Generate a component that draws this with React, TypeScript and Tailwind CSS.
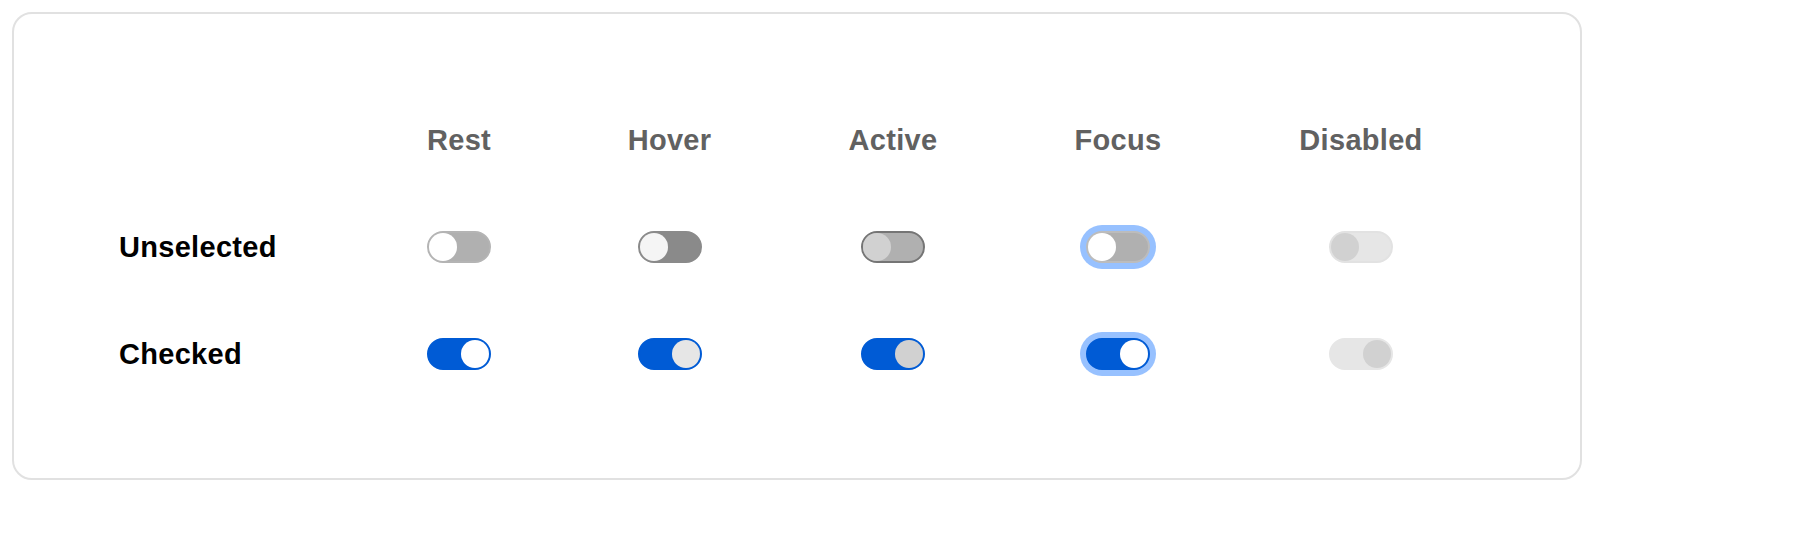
import React from 'react';

type ToggleStyle = {
  track: string;
  thumb: string;
  ring?: boolean;
};

const STATES = ['Rest', 'Hover', 'Active', 'Focus', 'Disabled'];

const UNSELECTED: ToggleStyle[] = [
  { track: 'bg-[#b0b0b0] border-[#b4b4b4]', thumb: 'bg-white' },
  { track: 'bg-[#8a8a8a] border-[#8a8a8a]', thumb: 'bg-[#f5f5f5]' },
  { track: 'bg-[#b0b0b0] border-[#757575]', thumb: 'bg-[#d1d1d1]' },
  { track: 'bg-[#b0b0b0] border-[#bcbcbc]', thumb: 'bg-white', ring: true },
  { track: 'bg-[#e6e6e6] border-[#e2e2e2]', thumb: 'bg-[#d1d1d1]' },
];

const CHECKED: ToggleStyle[] = [
  { track: 'bg-[#005bd5] border-[#005bd5]', thumb: 'bg-white' },
  { track: 'bg-[#005bd5] border-[#005bd5]', thumb: 'bg-[#e6e6e6]' },
  { track: 'bg-[#005bd5] border-[#005bd5]', thumb: 'bg-[#d1d1d1]' },
  { track: 'bg-[#005bd5] border-[#005bd5]', thumb: 'bg-white', ring: true },
  { track: 'bg-[#e6e6e6] border-[#e6e6e6]', thumb: 'bg-[#d1d1d1]' },
];

const Toggle: React.FC<{ on: boolean; look: ToggleStyle }> = ({ on, look }) => (
  <div
    className={`flex h-8 w-16 items-center rounded-full border-2 ${look.track} ${on ? 'justify-end' : 'justify-start'} ${
      look.ring ? 'ring-[6px] ring-[#97c1ff]' : ''
    }`}
  >
    <div className={`h-7 w-7 rounded-full ${look.thumb}`} />
  </div>
);

export default function App() {
  return (
    <div className="min-h-screen bg-white p-3 font-['Liberation_Sans',Arial,sans-serif]">
      <div className="h-[468px] w-[1570px] rounded-[20px] border-2 border-[#e1e1e1] pl-[105px] pt-[110px]">
        <div className="grid grid-cols-[240px_200px_221px_226px_224px_262px] grid-rows-[32px_32px_32px] items-center gap-y-[75px] text-[29px] font-bold leading-8 tracking-[0.3px]">
          <div />
          {STATES.map((s) => (
            <div key={s} className="text-center text-[#616161]">
              {s}
            </div>
          ))}

          <div className="text-black">Unselected</div>
          {UNSELECTED.map((look, i) => (
            <div key={i} className="flex justify-center">
              <Toggle on={false} look={look} />
            </div>
          ))}

          <div className="text-black">Checked</div>
          {CHECKED.map((look, i) => (
            <div key={i} className="flex justify-center">
              <Toggle on look={look} />
            </div>
          ))}
        </div>
      </div>
    </div>
  );
}
